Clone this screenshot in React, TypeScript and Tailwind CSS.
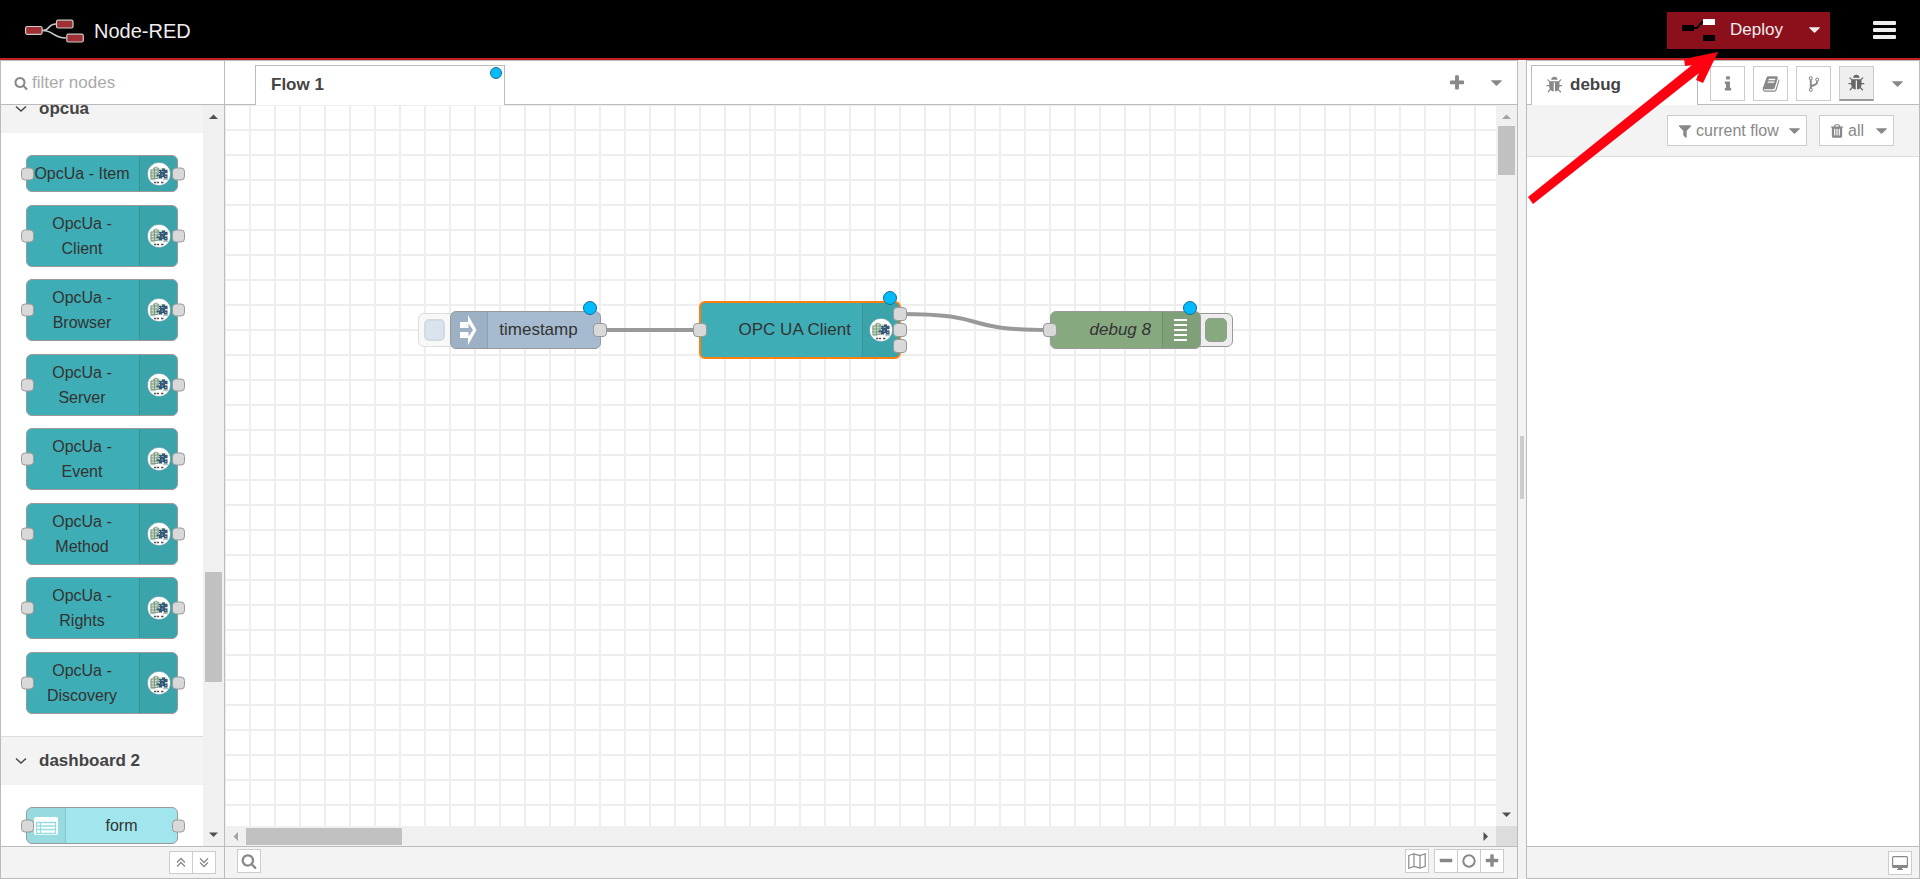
import React from "react";

const ICONS = {
  bug: "M1632 960q0 26-19 45t-45 19h-224q0 171-67 290l208 209q19 19 19 45t-19 45q-18 19-45 19t-45-19l-198-197q-5 5-15 13t-42 28.5-65 36.5-82 29-97 13v-896h-128v896q-51 0-101.5-13.5t-87-33-66-39-43.5-32.5l-15-14-183 207q-20 21-48 21-24 0-43-16-19-18-20.5-44.5t15.5-46.5l202-227q-58-114-58-274h-224q-26 0-45-19t-19-45 19-45 45-19h224v-294l-173-173q-19-19-19-45t19-45 45-19 45 19l173 173h844l173-173q19-19 45-19t45 19 19 45-19 45l-173 173v294h224q26 0 45 19t19 45zm-480-576h-640q0-133 93.5-226.5t226.5-93.5 226.5 93.5 93.5 226.5z",
  trash: "M704 1376v-704q0-14-9-23t-23-9h-64q-14 0-23 9t-9 23v704q0 14 9 23t23 9h64q14 0 23-9t9-23zm256 0v-704q0-14-9-23t-23-9h-64q-14 0-23 9t-9 23v704q0 14 9 23t23 9h64q14 0 23-9t9-23zm256 0v-704q0-14-9-23t-23-9h-64q-14 0-23 9t-9 23v704q0 14 9 23t23 9h64q14 0 23-9t9-23zm-544-992h448l-48-117q-7-9-17-11h-317q-10 2-17 11zm928 32v64q0 14-9 23t-23 9h-96v948q0 83-47 143.5t-113 60.5h-832q-66 0-113-58.5t-47-141.5v-952h-96q-14 0-23-9t-9-23v-64q0-14 9-23t23-9h309l70-167q15-37 54-63t79-26h320q40 0 79 26t54 63l70 167h309q14 0 23 9t9 23z",
  filter: "M1595 295q17 41-14 70l-493 493v742q0 42-39 59-13 5-25 5-27 0-45-19l-256-256q-19-19-19-45v-486l-493-493q-31-29-14-70 17-39 59-39h1280q42 0 59 39z",
  search: "M1216 832q0-185-131.5-316.5t-316.5-131.5-316.5 131.5-131.5 316.5 131.5 316.5 316.5 131.5 316.5-131.5 131.5-316.5zm512 832q0 52-38 90t-90 38q-54 0-90-38l-343-342q-179 124-399 124-143 0-273.5-55.5t-225-150-150-225-55.5-273.5 55.5-273.5 150-225 225-150 273.5-55.5 273.5 55.5 225 150 150 225 55.5 273.5q0 220-124 399l343 343q37 37 37 90z",
  plus: "M1600 736v192q0 40-28 68t-68 28h-416v416q0 40-28 68t-68 28h-192q-40 0-68-28t-28-68v-416h-416q-40 0-68-28t-28-68v-192q0-40 28-68t68-28h416v-416q0-40 28-68t68-28h192q40 0 68 28t28 68v416h416q40 0 68 28t28 68z",
  minus: "M1600 736v192q0 40-28 68t-68 28h-1216q-40 0-68-28t-28-68v-192q0-40 28-68t68-28h1216q40 0 68 28t28 68z",
  info: "M1216 1344v128q0 26-19 45t-45 19h-512q-26 0-45-19t-19-45v-128q0-26 19-45t45-19h64v-384h-64q-26 0-45-19t-19-45v-128q0-26 19-45t45-19h384q26 0 45 19t19 45v576h64q26 0 45 19t19 45zm-128-1152v192q0 26-19 45t-45 19h-256q-26 0-45-19t-19-45v-192q0-26 19-45t45-19h256q26 0 45 19t19 45z",
  fork: "M672 1472q0-40-28-68t-68-28-68 28-28 68 28 68 68 28 68-28 28-68zm0-1152q0-40-28-68t-68-28-68 28-28 68 28 68 68 28 68-28 28-68zm640 128q0-40-28-68t-68-28-68 28-28 68 28 68 68 28 68-28 28-68zm96 0q0 52-26 96.5t-70 69.5q-2 287-226 414-67 38-203 81-128 40-169.5 71t-41.5 100v26q44 25 70 69.5t26 96.5q0 80-56 136t-136 56-136-56-56-136q0-52 26-96.5t70-69.5v-820q-44-25-70-69.5t-26-96.5q0-80 56-136t136-56 136 56 56 136q0 52-26 96.5t-70 69.5v497q54-26 154-57 55-17 87.5-29.5t70.5-31 59-39.5 40.5-51 28-69.5 8.5-91.5q-44-25-70-69.5t-26-96.5q0-80 56-136t136-56 136 56 56 136z",
  book: "M1703 478q40 57 18 129l-275 906q-19 64-76.5 107.5t-122.5 43.5h-923q-77 0-148.5-53.5t-99.5-131.5q-24-67-2-127 0-4 3-27t4-37q1-8-3-21.5t-3-19.5q2-11 8-21t16.5-23.5 16.5-23.5q23-38 45-91.5t30-91.5q3-10 .5-30t-.5-28q3-11 17-28t17-23q21-36 42-92t25-90q1-9-2.5-32t.5-28q4-13 22-30.5t22-22.5q19-26 42.5-84.5t27.5-96.5q1-8-3-25.5t-2-26.5q2-8 9-18t18-23 17-21q8-12 16.5-30.5t15-35 16-36 19.5-32 26.5-23.5 36-11.5 47.5 5.5l-1 3q38-9 51-9h761q74 0 114 56t18 130l-274 906q-36 119-71.5 153.5t-128.5 34.5h-869q-27 0-38 15-11 16-1 43 24 70 144 70h923q29 0 56-15.5t35-41.5l300-987q7-22 5-57 38 15 59 43zm-1064 2q-4 13 2 22.5t20 9.5h608q13 0 25.5-9.5t16.5-22.5l21-64q4-13-2-22.5t-20-9.5h-608q-13 0-25.5 9.5t-16.5 22.5zm-83 256q-4 13 2 22.5t20 9.5h608q13 0 25.5-9.5t16.5-22.5l21-64q4-13-2-22.5t-20-9.5h-608q-13 0-25.5 9.5t-16.5 22.5z",
};

function Icon({ name, className = "size-[18px]" }: { name: keyof typeof ICONS; className?: string }) {
  return (
    <svg viewBox="0 0 1792 1792" className={`shrink-0 fill-current ${className}`} aria-hidden="true">
      <path d={ICONS[name]} />
    </svg>
  );
}

function Caret({ className = "" }: { className?: string }) {
  return (
    <svg viewBox="0 0 12 6" className={`h-[6px] w-[11px] shrink-0 fill-current ${className}`} aria-hidden="true">
      <path d="M0.6 0h10.8q.8 0 .3.8L6.6 5.7q-.6.5-1.2 0L.3.8Q-.2 0 .6 0z" />
    </svg>
  );
}

function Logo() {
  return (
    <svg viewBox="0 0 60 24" className="h-6 w-[60px]" aria-hidden="true">
      <g fill="none" stroke="#ccc" strokeWidth="1.700">
        <path d="M17 11.500C26 11.500 22 5 31 5M17 11.500C30 11.500 27 19 41 19" />
      </g>
      <g fill="#a03034" stroke="#ccc" strokeWidth="1.200">
        <rect x=".6" y="7.500" width="16.500" height="7.800" rx="1.500" />
        <rect x="31.500" y="1.200" width="16.500" height="7.800" rx="1.500" />
        <rect x="41.800" y="15.200" width="16.500" height="7.800" rx="1.500" />
      </g>
    </svg>
  );
}

function OpcIcon() {
  return (
    <svg viewBox="0 0 24 24" className="size-6 shrink-0" aria-hidden="true">
      <circle cx="12" cy="12" r="11.700" fill="#fff" stroke="#2f8293" strokeWidth=".6" />
      <path d="M3.500 8l5-2.500 4 1 4-.5 4 1v9.500h-17z" fill="#c9dac8" />
      <path d="M3.500 8h9M3.500 11h8M3.500 14h9M3.500 16.500h8M4 8v8M7.500 6v10M11 6v10M6 6.500L9 5l3 1.500" stroke="#6f8f74" strokeWidth=".8" fill="none" />
      <path d="M12 8h3V6.500h3V8h2.500v3H18v1.500h2.500v4H17V15h-2v1.500h-3V14H9.500v-1.500H13V11h-1z" fill="#35587a" />
      <path d="M10 9.500h3M14.500 9.500h2M14.500 13h1.500M18 14.500h1.500" stroke="#9bbdd0" strokeWidth=".9" />
      <path d="M3.500 17.700h5M16 17.700h5" stroke="#7c9b83" strokeWidth=".7" />
      <path d="M7 20.500h2.300M10 20.500h2M14 20.500h2.500" stroke="#555" strokeWidth="1.500" />
    </svg>
  );
}

const PORT = "absolute size-[14px] rounded-[4px] border border-[#999] bg-[#d9d9d9]";
const PALETTE_PORT = "absolute top-1/2 size-[13px] -translate-y-1/2 rounded-[4px] border border-[#999] bg-[#d9d9d9]";

const paletteNodes = ["OpcUa - Item", "OpcUa - Client", "OpcUa - Browser", "OpcUa - Server", "OpcUa - Event", "OpcUa - Method", "OpcUa - Rights", "OpcUa - Discovery"];

function PaletteNode({ label }: { label: string }) {
  return (
    <li className="relative flex min-h-[37px] w-[152px] rounded-[6px] border border-[#999] bg-[#3fadb5] text-[16px] leading-[25px] text-[#333]">
      <span className={`${PALETTE_PORT} -left-[6px]`} />
      <span className="flex flex-1 items-center justify-center pr-[2px]">
        {label.endsWith("Item") ? (
          <span className="py-[5px] whitespace-nowrap">{label}</span>
        ) : (
          <span className="w-[86px] py-[5px] text-center">{label}</span>
        )}
      </span>
      <span className="flex w-[38px] items-center justify-center rounded-r-[5px] border-l border-black/10 bg-black/5">
        <OpcIcon />
      </span>
      <span className={`${PALETTE_PORT} -right-[8px]`} />
    </li>
  );
}

function Chevron() {
  return (
    <svg viewBox="0 0 12 8" className="h-2 w-3" fill="none" stroke="#444" strokeWidth="1.400" aria-hidden="true">
      <path d="M1 1.500l5 4.500 5-4.500" />
    </svg>
  );
}

function Category({ label, className = "" }: { label: string; className?: string }) {
  return (
    <button className={`flex h-[49px] w-full items-center gap-3 border-t border-[#ddd] bg-[#f3f3f3] pl-[14px] text-[17px] font-bold text-[#444] ${className}`}>
      <Chevron />
      {label}
    </button>
  );
}

function Arrow({ dir, dim = false }: { dir: "up" | "down" | "left" | "right"; dim?: boolean }) {
  const paths = { up: "M0 7l4.500-4.500L9 7z", down: "M0 2.500h9L4.500 7z", left: "M7 0v9L2.500 4.500z", right: "M2.500 0v9L7 4.500z" };
  return (
    <svg viewBox="0 0 9 9" className="size-[9px] shrink-0" fill={dim ? "#a3a3a3" : "#505050"} aria-hidden="true">
      <path d={paths[dir]} />
    </svg>
  );
}

function Palette() {
  return (
    <aside className="flex w-[225px] shrink-0 flex-col border border-[#bbb]">
      <label className="flex h-[44px] shrink-0 items-center gap-1 border-b border-[#bbb] pl-[13px] text-[#888]">
        <Icon name="search" className="size-[14px]" />
        <input aria-label="filter nodes" placeholder="filter nodes" className="w-[160px] text-[17px] outline-none placeholder:text-[#aaa]" />
      </label>
      <div className="flex min-h-0 flex-1">
        <div className="min-w-0 flex-1 overflow-hidden">
          <Category label="opcua" className="-mt-[21px]" />
          <ul className="flex h-[603px] flex-col items-start justify-between py-[22px] pl-[25px]">
            {paletteNodes.map((n) => (
              <PaletteNode key={n} label={n} />
            ))}
          </ul>
          <Category label="dashboard 2" />
          <div className="py-[22px] pl-[25px]">
            <div className="relative flex h-[37px] w-[152px] rounded-[6px] border border-[#999] bg-[#a0e6ec] text-[16px] text-[#333]">
              <span className="flex w-[39px] items-center rounded-l-[5px] border-r border-black/10 bg-black/5 pl-[7px]">
                <svg viewBox="0 0 24 18" className="h-[18px] w-6" aria-hidden="true">
                  <rect width="24" height="18" rx="2" fill="#fff" />
                  <path d="M2.500 5.500h19v11h-19zM2.500 9h19M2.500 12.500h19M6.500 5.500v11" fill="none" stroke="#98dbe1" strokeWidth="1.300" />
                </svg>
              </span>
              <span className="flex flex-1 items-center justify-center">form</span>
              <span className={`${PALETTE_PORT} -left-[6px]`} />
              <span className={`${PALETTE_PORT} -right-[8px]`} />
            </div>
          </div>
        </div>
        <div className="flex w-[21px] flex-col items-center justify-between bg-[#f0f0f0] py-[7px]">
          <Arrow dir="up" />
          <div className="flex w-full flex-1 flex-col items-center">
            <div className="flex-[451]" />
            <div className="h-[110px] w-[17px] bg-[#c1c1c1]" />
            <div className="flex-[148]" />
          </div>
          <Arrow dir="down" />
        </div>
      </div>
      <div className="flex h-[32px] shrink-0 items-center justify-end border-t border-[#bbb] bg-[#f3f3f3] pr-2">
        {["M1 5.500L5 1.500l4 4M1 9.500l4-4 4 4", "M1 1.500l4 4 4-4M1 5.500l4 4 4-4"].map((d, i) => (
          <button key={d} aria-label={i ? "Expand all categories" : "Collapse all categories"} className={`flex h-[23px] w-6 items-center justify-center border border-[#ccc] bg-white ${i ? "-ml-px" : ""}`}>
            <svg viewBox="0 0 10 11" className="h-[11px] w-[10px]" fill="none" stroke="#888" strokeWidth="1.300">
              <path d={d} />
            </svg>
          </button>
        ))}
      </div>
    </aside>
  );
}

function Changed({ className = "size-[14px]" }: { className?: string }) {
  return <span className={`absolute rounded-full border border-[#1a6b93] bg-[#00bcff] ${className}`} />;
}

function Canvas() {
  return (
    <div className="relative min-w-0 flex-1 overflow-hidden bg-white bg-[linear-gradient(to_right,#eee_1px,transparent_1px,transparent_24px,#eee_24px),linear-gradient(to_bottom,#eee_1px,transparent_1px,transparent_24px,#eee_24px)] bg-[size:25px_25px] text-[17px] text-[#333]">
      <svg className="absolute top-0 left-0 h-full w-full" fill="none" stroke="#999" strokeWidth="4" aria-hidden="true">
        <path d="M375 225H475M675 209C771 209 729 225 825 225" />
      </svg>

      <button aria-label="Inject" className="absolute top-[208px] left-[193px] h-[34px] w-[40px] rounded-[6px] border border-[#ddd] bg-[#f8f8f8] p-[5px]">
        <span className="block h-full w-[21px] rounded-[5px] border-2 border-[#d3dae2] bg-[#dbe3ee]" />
      </button>
      <div className="absolute top-[206px] left-[225px] flex h-[38px] w-[151px] rounded-[6px] border border-[#999] bg-[#a6bbcf]">
        <span className="flex w-[37px] items-center rounded-l-[5px] border-r border-black/10 bg-black/5 pl-[9px]">
          <svg viewBox="0 0 17 30" className="h-[30px] w-[17px]" aria-hidden="true">
            <path d="M0 7h8V0l8.500 15L8 30v-7H0v-6h8.500v4.500L13 15 8.500 8.500V13H0z" fill="#fff" />
          </svg>
        </span>
        <span className="flex flex-1 items-center justify-center pr-[11px]">timestamp</span>
      </div>
      <span className={`${PORT} top-[218px] left-[368px]`} />
      <Changed className="top-[196px] left-[358px] size-[14px]" />

      <div className="absolute top-[196px] left-[474px] flex h-[58px] w-[202px] rounded-[6px] border-2 border-[#ff7f0e] bg-[#3fadb5]">
        <span className="flex flex-1 items-center justify-end pr-[11px]">OPC UA Client</span>
        <span className="flex w-[37px] items-center rounded-r-[4px] border-l border-black/10 bg-black/5 pl-[6px]">
          <OpcIcon />
        </span>
      </div>
      <span className={`${PORT} top-[218px] left-[468px]`} />
      <span className={`${PORT} top-[202px] left-[668px]`} />
      <span className={`${PORT} top-[218px] left-[668px]`} />
      <span className={`${PORT} top-[234px] left-[668px]`} />
      <Changed className="top-[186px] left-[658px] size-[14px]" />

      <button aria-label="Toggle debug output" className="absolute top-[208px] left-[967px] flex h-[34px] w-[41px] items-center justify-end rounded-[6px] border border-[#999] bg-[#eee] pr-[5px]">
        <span className="block h-6 w-[22px] rounded-[5px] border border-[#999] bg-[#87a980]" />
      </button>
      <div className="absolute top-[206px] left-[825px] flex h-[38px] w-[151px] rounded-[6px] border border-[#999] bg-[#87a980]">
        <span className="flex flex-1 items-center justify-end pr-[11px] italic">debug 8</span>
        <span className="flex w-[38px] items-center rounded-r-[5px] border-l border-black/10 bg-black/5 pl-[11px]">
          <svg viewBox="0 0 13 24" className="h-6 w-[13px]" stroke="#fff" strokeWidth="2" aria-hidden="true">
            <path d="M0 2h13M0 7h13M0 12h13M0 17h13M0 22h13" />
          </svg>
        </span>
      </div>
      <span className={`${PORT} top-[218px] left-[818px]`} />
      <Changed className="top-[196px] left-[958px] size-[14px]" />
    </div>
  );
}

const FOOT_BTN = "flex h-6 w-6 items-center justify-center border border-[#ccc] bg-white text-[#888]";

function Workspace() {
  return (
    <main className="flex min-w-0 flex-1 flex-col border-y border-r border-[#bbb]">
      <div className="flex h-[44px] shrink-0">
        <div className="w-[30px] border-b border-[#bbb]" />
        <div className="relative mt-1 flex w-[250px] items-center border-x border-t border-[#bbb] pb-[2px] pl-[15px] text-[17px] font-bold text-[#444]">
          Flow 1
          <Changed className="top-px right-[2px] size-[12px]" />
        </div>
        <div className="flex flex-1 items-center justify-end border-b border-[#bbb] pr-[15px] text-[#888]">
          <button aria-label="Add flow" className="mr-[25px]">
            <Icon name="plus" />
          </button>
          <button aria-label="List flows">
            <Caret />
          </button>
        </div>
      </div>
      <div className="flex min-h-0 flex-1">
        <Canvas />
        <div className="flex w-[21px] flex-col items-center bg-[#f0f0f0] py-[7px]">
          <Arrow dir="up" dim />
          <div className="mt-[5px] h-[49px] w-[17px] bg-[#c1c1c1]" />
          <div className="flex-1" />
          <Arrow dir="down" />
        </div>
      </div>
      <div className="flex h-[20px] shrink-0 bg-[#f0f0f0]">
        <div className="flex flex-1 items-center px-[6px]">
          <Arrow dir="left" dim />
          <div className="ml-[6px] h-[17px] w-[156px] bg-[#c1c1c1]" />
          <div className="flex-1" />
          <Arrow dir="right" />
        </div>
        <div className="w-[21px] bg-[#dcdcdc]" />
      </div>
      <div className="flex h-[32px] shrink-0 items-start border-t border-[#bbb] bg-[#f3f3f3] pt-[2px] pr-[13px] pl-3">
        <button aria-label="Search flows" className={FOOT_BTN}>
          <Icon name="search" className="size-4" />
        </button>
        <div className="flex-1" />
        <button aria-label="Toggle navigator" className={`${FOOT_BTN} mr-[5px]`}>
          <svg viewBox="0 0 18 16" className="h-4 w-[18px]" fill="none" stroke="currentColor" strokeWidth="1.200">
            <path d="M.8 2.500L6 .8l6 1.700L17.200.8v12.500L12 15.200l-6-1.700-5.200 1.700zM6 .8v12.700M12 2.500v12.700" />
          </svg>
        </button>
        <button aria-label="Zoom out" className={FOOT_BTN}>
          <Icon name="minus" className="size-4" />
        </button>
        <button aria-label="Reset zoom" className={`${FOOT_BTN} -ml-px`}>
          <svg viewBox="0 0 14 14" className="size-[14px]" fill="none" stroke="currentColor" strokeWidth="2">
            <circle cx="7" cy="7" r="5.700" />
          </svg>
        </button>
        <button aria-label="Zoom in" className={`${FOOT_BTN} -ml-px`}>
          <Icon name="plus" className="size-4" />
        </button>
      </div>
    </main>
  );
}

const TAB_BTN = "flex size-[35px] items-center justify-center border border-[#ccc] bg-white text-[#888]";

function Sidebar() {
  return (
    <aside className="flex w-[394px] shrink-0 flex-col border border-[#bbb] bg-white">
      <div className="flex h-[44px] shrink-0">
        <div className="w-1 border-b border-[#bbb]" />
        <div className="mt-1 flex w-[167px] items-center gap-[6px] border-x border-t border-[#bbb] pb-[2px] pl-[14px] text-[17px] font-bold text-[#444]">
          <Icon name="bug" className="size-[18px] text-[#888]" />
          debug
        </div>
        <div className="flex flex-1 items-center gap-2 border-b border-[#bbb] pt-[2px] pl-3">
          <button aria-label="Information" className={TAB_BTN}><Icon name="info" className="size-[18px]" /></button>
          <button aria-label="Help" className={TAB_BTN}><Icon name="book" /></button>
          <button aria-label="Project history" className={TAB_BTN}><Icon name="fork" /></button>
          <button aria-label="Debug messages" className="flex size-[35px] items-center justify-center border border-b-2 border-[#ccc] border-b-[#999] bg-[#efefef] text-[#666]"><Icon name="bug" /></button>
          <button aria-label="More tabs" className="ml-[10px] text-[#888]"><Caret /></button>
        </div>
      </div>
      <div className="flex h-[52px] shrink-0 items-center justify-end gap-3 border-b border-[#ddd] bg-[#f3f3f3] pr-[25px] text-[16px] text-[#888]">
        <button className="flex h-[31px] w-[140px] items-center border border-[#ccc] bg-white pl-[9px]">
          <Icon name="filter" className="mr-[3px] size-4" />
          current flow
          <Caret className="ml-auto mr-[6px]" />
        </button>
        <button className="flex h-[31px] w-[75px] items-center border border-[#ccc] bg-white pl-[9px]">
          <Icon name="trash" className="mr-[3px] size-4" />
          all
          <Caret className="ml-auto mr-[6px]" />
        </button>
      </div>
      <div className="flex-1" />
      <div className="flex h-[32px] shrink-0 items-center justify-end border-t border-[#bbb] bg-[#f3f3f3] pr-[7px]">
        <button aria-label="Open in new window" className={FOOT_BTN}>
          <svg viewBox="0 0 16 14" className="h-[14px] w-4">
            <rect x=".6" y=".6" width="14.800" height="10.800" rx="1" fill="none" stroke="currentColor" strokeWidth="1.200" />
            <path d="M.5 9h15v2.500H.500zM6 11h4v2H6zM5 13h6v1H5z" fill="currentColor" />
          </svg>
        </button>
      </div>
    </aside>
  );
}

export default function App() {
  return (
    <div className="relative flex h-screen flex-col overflow-hidden bg-[#f3f3f3] font-['Liberation_Sans',Arial,sans-serif]">
      <header className="flex h-[60px] shrink-0 items-center border-b-2 border-[#c02020] bg-black pt-[2px] text-[#eee]">
        <div className="flex items-center gap-[9px] pt-[2px] pl-[25px] text-[20px]">
          <Logo />
          <span>Node-RED</span>
        </div>
        <div className="ml-auto flex h-[37px] bg-[#8c101c] text-[17px]">
          <button className="flex items-center gap-[15px] pl-[15px]">
            <svg viewBox="0 0 33 22" className="h-[22px] w-[33px]" aria-hidden="true">
              <path d="M12 9h3l5-6h1" fill="none" stroke="#000" strokeWidth="2" />
              <path d="M0 6h12v6H0zM21 16h12v6H21z" />
              <path d="M21 0h12v6H21z" fill="#fff" />
            </svg>
            Deploy
          </button>
          <button aria-label="Deploy options" className="w-[47px] pl-[26px]">
            <Caret />
          </button>
        </div>
        <button aria-label="Menu" className="mr-6 ml-[43px]">
          <svg viewBox="0 0 23 18" className="h-[18px] w-[23px] fill-current">
            <path d="M1 0h21q1 0 1 1v2q0 1-1 1H1Q0 4 0 3V1q0-1 1-1zM1 7h21q1 0 1 1v2q0 1-1 1H1q-1 0-1-1V8q0-1 1-1zM1 14h21q1 0 1 1v2q0 1-1 1H1q-1 0-1-1v-2q0-1 1-1z" />
          </svg>
        </button>
      </header>
      <div className="flex min-h-0 flex-1 bg-white">
        <Palette />
        <Workspace />
        <div className="flex w-2 shrink-0 items-center justify-center bg-[#f3f3f3] pb-1">
          <div className="h-[63px] w-1 bg-[#ccc]" />
        </div>
        <Sidebar />
      </div>
      <svg viewBox="0 0 192 154" className="pointer-events-none absolute top-[51px] right-[201px] h-[154px] w-[192px]" aria-hidden="true">
        <path d="M1 146L165 14 158 15 157 8 191 1 176 32 169 29 172 22 6 153z" fill="#ff0010" />
      </svg>
    </div>
  );
}
